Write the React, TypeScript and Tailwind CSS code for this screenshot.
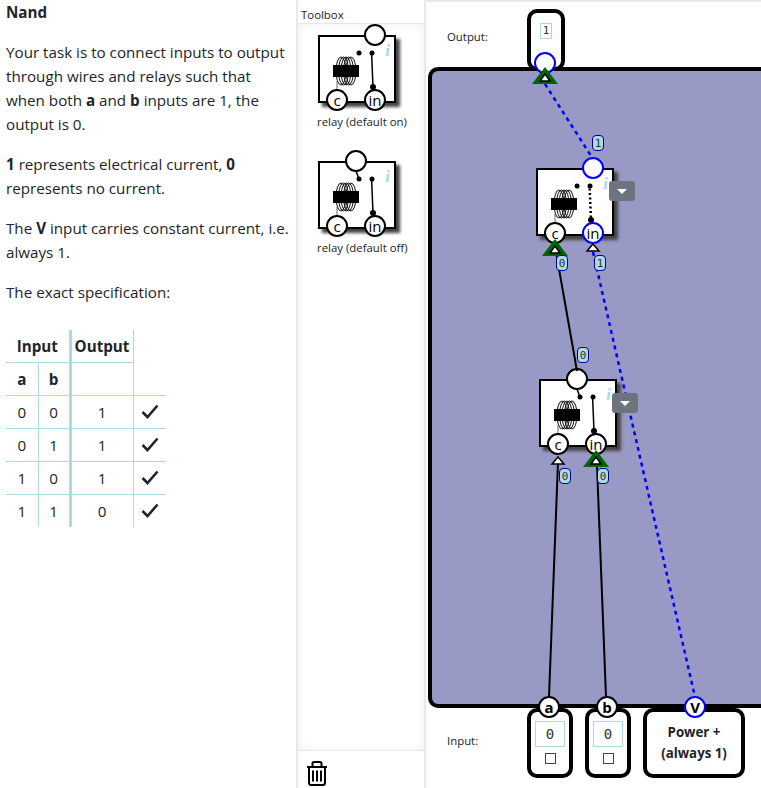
const FONT = "font-['Open_Sans','Noto_Sans',sans-serif]";

// Coil + contacts drawn inside the relay box
const RelayInner = ({ defaultOn, dotted }: { defaultOn: boolean; dotted?: boolean }) => (
    <svg className="absolute left-0 top-0" width="78" height="68" viewBox="0 0 78 68" fill="none">
        {[-5, -2.5, 0, 2.5, 5].map((dx) => (
            <ellipse key={dx} cx={28 + dx} cy="36" rx="5" ry="14" stroke="#111" strokeWidth="1" />
        ))}
        <path d="M19 46V56" stroke="#666" strokeWidth="1" />
        <rect x="15" y="30" width="26" height="12" fill="#000" />
        <circle cx="41" cy="18" r="2.5" fill="#000" />
        <circle cx="54" cy="18" r="2.5" fill="#000" />
        <circle cx="55" cy="52" r="3" fill="#000" />
        {defaultOn ? null : <path d="M38 10L41 18" stroke="#000" strokeWidth="1.5" />}
        <path
            d="M53.5 16L55 52"
            stroke="#000"
            strokeWidth={dotted ? 2.5 : 1.5}
            strokeDasharray={dotted ? '2 2.5' : undefined}
        />
    </svg>
);

const Pin = ({ label, blue, className }: { label?: string; blue?: boolean; className: string }) => (
    <div
        className={`absolute flex h-[22px] w-[22px] items-center justify-center rounded-full border-2 bg-white text-[15px] leading-none text-black ${
            blue ? 'border-[#0000ff]' : 'border-black'
        } ${className}`}
    >
        {label}
    </div>
);

const Relay = ({
    defaultOn,
    topBlue,
    inBlue,
    dotted,
}: {
    defaultOn: boolean;
    topBlue?: boolean;
    inBlue?: boolean;
    dotted?: boolean;
}) => (
    <div className="relative h-[68px] w-[78px] border-2 border-black bg-white shadow-[4px_4px_3px_#444]">
        <div className="absolute -left-[2px] -top-[2px]">
            <RelayInner defaultOn={defaultOn} dotted={dotted} />
        </div>
        <span className="absolute right-[4px] top-[5px] font-['Liberation_Serif',serif] text-[17px] font-bold italic leading-none text-[#add8e6]">
            i
        </span>
        <Pin blue={topBlue} className={`-top-[13px] ${defaultOn ? 'left-[44px]' : 'left-[25px]'}`} />
        <Pin label="c" className="left-[6px] top-[52px]" />
        <Pin label="in" blue={inBlue} className="left-[44px] top-[52px]" />
    </div>
);

const Badge = ({ value, className }: { value: string; className: string }) => (
    <div
        className={`absolute flex h-[16px] w-[12px] items-center justify-center rounded-[4px] border border-[#00008b] bg-[#add8e6] font-['DejaVu_Sans_Mono',monospace] text-[11px] leading-none text-[#333] ${className}`}
    >
        {value}
    </div>
);

const CaretButton = ({ className }: { className: string }) => (
    <div className={`absolute flex h-[20px] w-[26px] items-center justify-center rounded-[3px] bg-[#6c757d] ${className}`}>
        <div className="h-0 w-0 border-x-[5px] border-t-[5px] border-x-transparent border-t-white" />
    </div>
);

// Triangle connectors on the wires
const Triangle = ({ x, y, big }: { x: number; y: number; big?: boolean }) =>
    big ? (
        <g>
            <path d={`M${x} ${y}L${x + 13} ${y + 17}H${x - 13}Z`} fill="#006400" />
            <path d={`M${x} ${y + 7}L${x + 5} ${y + 14}H${x - 5}Z`} fill="#fff" stroke="#000" strokeWidth="1.5" />
        </g>
    ) : (
        <path d={`M${x} ${y + 1}L${x + 6} ${y + 8}H${x - 6}Z`} fill="#fff" stroke="#000" strokeWidth="1.5" />
    );

const InputPin = ({ label, className }: { label: string; className: string }) => (
    <div className={`absolute flex h-[70px] w-[46px] flex-col items-center rounded-[10px] border-4 border-black bg-white ${className}`}>
        <div className="mt-[9px] flex h-[26px] w-[30px] shrink-0 items-center justify-center border border-[#add8e6] font-['DejaVu_Sans_Mono',monospace] text-[14px] text-[#333]">
            0
        </div>
        <div className="mt-[6px] h-[11px] w-[11px] border border-[#444]" />
        <Pin label={label} className="-top-[16px] left-[7px] font-bold" />
    </div>
);

const rows = [
    ['0', '0', '1'],
    ['0', '1', '1'],
    ['1', '0', '1'],
    ['1', '1', '0'],
];

const Check = () => (
    <svg className="mx-auto" width="18" height="15" viewBox="0 0 18 15" fill="none">
        <path d="M1.5 8L6.5 13L16.5 1.5" stroke="#212529" strokeWidth="2.6" />
    </svg>
);

const Trash = () => (
    <svg width="22" height="25" viewBox="0 0 22 25" fill="none" stroke="#000" strokeWidth="2">
        <path d="M1 6H21" />
        <path d="M6.5 5V2.5C6.5 1.7 7 1 8 1H14C15 1 15.5 1.7 15.5 2.5V5" />
        <path d="M3 6V21.5C3 23 4 24 5 24H17C18 24 19 23 19 21.5V6" />
        <path d="M7 9.5V20.5M11 9.5V20.5M15 9.5V20.5" />
    </svg>
);

const App = () => {
    return (
        <div className={`flex h-[788px] w-[761px] overflow-hidden bg-white text-[15.2px] leading-6 text-[#212529] ${FONT}`}>
            <div className="w-[296px] shrink-0 pl-[6px] pr-[4px]">
                <h2 className="mb-4 font-bold">Nand</h2>
                <p className="mb-4">
                    Your task is to connect inputs to output through wires and relays such that when both <b>a</b> and <b>b</b> inputs are 1, the output is 0.
                </p>
                <p className="mb-4">
                    <b>1</b> represents electrical current, <b>0</b> represents no current.
                </p>
                <p className="mb-4">
                    The <b>V</b> input carries constant current, i.e. always 1.
                </p>
                <p className="mb-[26px]">The exact specification:</p>
                <table className="border-collapse text-center">
                    <tbody>
                        <tr className="h-[32px]">
                            <th colSpan={2} className="border-b border-[#add8e6]">Input</th>
                            <th className="w-[63px] border-b border-l-[3px] border-r border-[#add8e6]">Output</th>
                            <th className="w-[33px]" />
                        </tr>
                        <tr className="h-[33px]">
                            <th className="w-[32px] border-b border-r border-[#add8e6]">a</th>
                            <th className="w-[32px] border-b border-[#add8e6]">b</th>
                            <th className="border-b border-l-[3px] border-r border-[#add8e6]" />
                            <th />
                        </tr>
                        {rows.map((r, i) => (
                            <tr key={i} className="h-[33px]">
                                <td className="border-t border-r border-[#add8e6]">{r[0]}</td>
                                <td className="border-t border-[#add8e6]">{r[1]}</td>
                                <td className="border-t border-l-[3px] border-r border-[#add8e6]">{r[2]}</td>
                                <td className="border-t border-[#add8e6]">
                                    <Check />
                                </td>
                            </tr>
                        ))}
                    </tbody>
                </table>
            </div>

            <div className="flex w-[130px] shrink-0 flex-col border-x-2 border-x-[#e9e9e9] text-[11.4px] leading-4">
                <div className="h-[24px] border-b border-[#e6e6e6] pl-[3px] pt-[7px] leading-4">Toolbox</div>
                <div className="flex flex-1 flex-col pl-[19px] pt-[11px] shadow-[inset_0_0_10px_#eeeeee]">
                    <div className="ml-px">
                        <Relay defaultOn />
                    </div>
                    <div className="mb-[31px] mt-[11px] h-[16px]">relay (default on)</div>
                    <div className="ml-px">
                        <Relay defaultOn={false} />
                    </div>
                    <div className="mt-[11px]">relay (default off)</div>
                </div>
                <div className="flex h-[38px] items-center border-t border-[#e6e6e6] pl-[8px] pt-[7px]">
                    <Trash />
                </div>
            </div>

            <div className="relative flex-1 border-t-2 border-[#e9e9e9] text-[11.4px]">
                <span className="absolute left-[21px] top-[27px] leading-4">Output:</span>
                <span className="absolute left-[21px] top-[731px] leading-4">Input:</span>

                <div className="absolute left-[2px] top-[65px] h-[641px] w-[400px] rounded-[10px] border-4 border-black bg-[#9999c6]" />

                <div className="absolute left-[101px] top-[7px] flex h-[62px] w-[38px] justify-center rounded-[10px] border-4 border-black bg-white">
                    <div className="mt-[10px] flex h-[16px] w-[12px] items-center justify-center border border-[#add8e6] font-['DejaVu_Sans_Mono',monospace] text-[11px] text-[#333]">
                        1
                    </div>
                </div>
                <InputPin label="a" className="left-[101px] top-[706px]" />
                <InputPin label="b" className="left-[159px] top-[706px]" />
                <div className="absolute left-[217px] top-[706px] flex h-[70px] w-[102px] items-center justify-center rounded-[10px] border-4 border-black bg-white text-center text-[13.3px] font-bold leading-[21px]">
                    <span>
                        Power +
                        <br />
                        (always 1)
                    </span>
                    <Pin label="V" blue className="-top-[16px] left-[37px]" />
                </div>

                <Pin blue className="left-[108px] top-[50px]" />

                <div className="absolute left-[110px] top-[166px]">
                    <Relay defaultOn topBlue inBlue dotted />
                </div>
                <div className="absolute left-[113px] top-[377px]">
                    <Relay defaultOn={false} />
                </div>

                <svg className="absolute left-0 top-[-2px]" width="335" height="788" viewBox="426 0 335 788" fill="none">
                    <path d="M545 84L593 159" stroke="#0000ff" strokeWidth="2.5" strokeDasharray="4 4" />
                    <path d="M593 252L695 697" stroke="#0000ff" strokeWidth="2.5" strokeDasharray="4 4" />
                    <path d="M556 252L577 371" stroke="#000" strokeWidth="2" />
                    <path d="M549 697L558 462" stroke="#000" strokeWidth="2" />
                    <path d="M606 697L597 466" stroke="#000" strokeWidth="2" />
                    <Triangle x={545} y={67} big />
                    <Triangle x={555} y={239} big />
                    <Triangle x={593} y={243} />
                    <Triangle x={558} y={456} />
                    <Triangle x={596} y={450} big />
                </svg>

                <CaretButton className="left-[183px] top-[179px]" />
                <CaretButton className="left-[186px] top-[391px]" />

                <Badge value="1" className="left-[166px] top-[133px]" />
                <Badge value="0" className="left-[130px] top-[253px]" />
                <Badge value="1" className="left-[168px] top-[253px]" />
                <Badge value="0" className="left-[151px] top-[345px]" />
                <Badge value="0" className="left-[133px] top-[466px]" />
                <Badge value="0" className="left-[171px] top-[466px]" />
            </div>
        </div>
    );
};

export default App;
